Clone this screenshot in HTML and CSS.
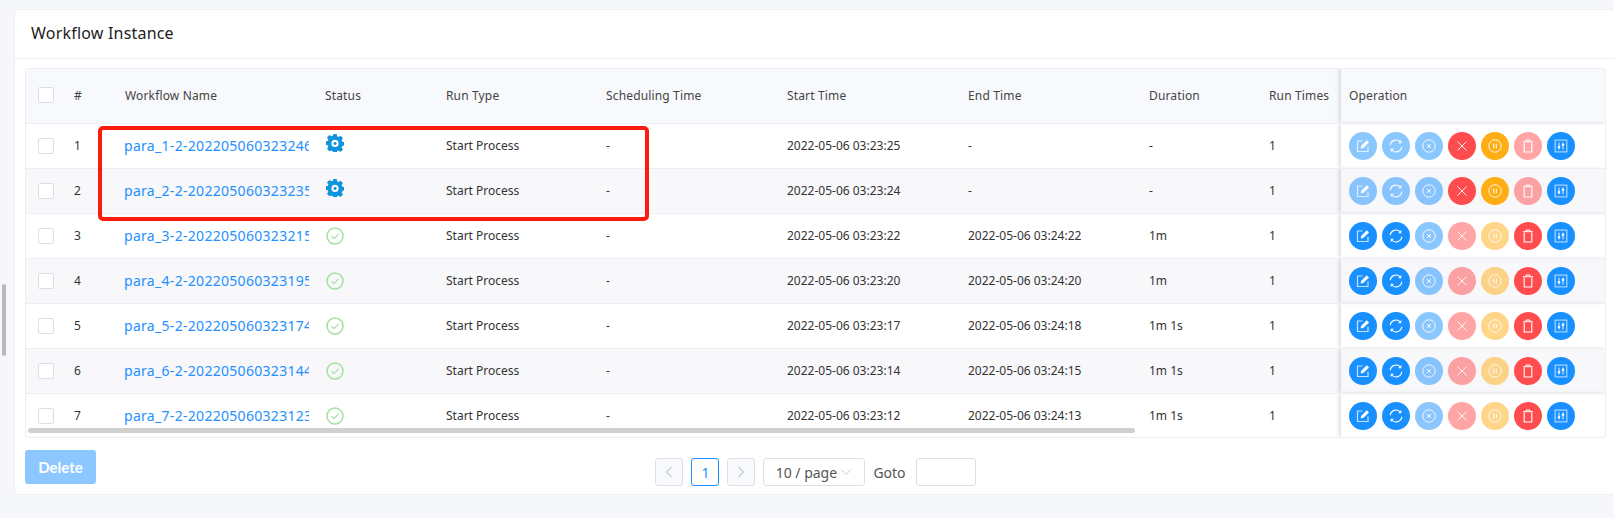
FILE: index.html
```html
<!DOCTYPE html>
<html lang="en">
<head>
  <meta charset="UTF-8">
  <title>Workflow Instance</title>
  <link rel="stylesheet" href="styles.css">
</head>
<body>
  <svg class="icon-defs" width="0" height="0">
    <defs>
      <symbol id="i-edit" viewBox="0 0 14 14"><path d="M6.500 2H1.500v10.500h10.500V7.500" fill="none" stroke="currentColor" stroke-width="1.200" opacity=".75"/><path d="M10.800 1.200l2.200 2.200-5.700 5.700-2.600.4.400-2.600z" fill="currentColor"/></symbol>
      <symbol id="i-refresh" viewBox="0 0 14 14"><path d="M1.200 6.300A5.900 5.900 0 0 1 11.400 3M12.800 7.700A5.900 5.900 0 0 1 2.600 11" fill="none" stroke="currentColor" stroke-width="1.100"/><path d="M12.300 1.100v3.200H9.100zM1.700 12.900V9.700h3.200z" fill="currentColor"/></symbol>
      <symbol id="i-stop" viewBox="0 0 14 14"><circle cx="7" cy="7" r="6.200" fill="none" stroke="currentColor" stroke-width=".9"/><path d="M5.100 5.100l3.800 3.800M8.900 5.100l-3.800 3.800" stroke="currentColor" stroke-width="1"/></symbol>
      <symbol id="i-close" viewBox="0 0 14 14"><path d="M2.500 2.500l9 9M11.500 2.500l-9 9" stroke="currentColor" stroke-width=".9"/></symbol>
      <symbol id="i-pause" viewBox="0 0 14 14"><circle cx="7" cy="7" r="6.200" fill="none" stroke="currentColor" stroke-width=".9"/><path d="M5.700 4.600v4.800M8.300 4.600v4.800" stroke="currentColor" stroke-width="1"/></symbol>
      <symbol id="i-trash" viewBox="0 0 14 14"><path d="M2 2.700h10M5 2.700V1h4v1.700" fill="none" stroke="currentColor" stroke-width="1"/><path d="M3.200 3.500v9.500h7.600V3.500" fill="none" stroke="currentColor" stroke-width="1.100"/></symbol>
      <symbol id="i-gantt" viewBox="0 0 14 14"><path d="M1.200 1.200h11.600v11.600H1.200z" fill="none" stroke="currentColor" stroke-width="1.300" opacity=".6"/><path d="M5 3.500v7M9 3.500v7" stroke="currentColor" stroke-width=".9"/><path d="M3.800 7.200h2.400v2H3.800zM7.800 4.800h2.400v2H7.800z" fill="currentColor"/></symbol>
      <symbol id="i-gear" viewBox="0 0 16 16"><path fill-rule="evenodd" d="M6.500 0h3l.4 2.100 1.300.6L13 1.500l2.100 2.200-1.200 1.700.6 1.400 2 .4v3l-2 .4-.6 1.400 1.200 1.700-2.100 2.200-1.800-1.200-1.300.6-.4 2.100h-3l-.4-2.100-1.300-.6L3 15.300.9 13.100l1.200-1.700-.6-1.400-2-.4V6.600l2-.4.6-1.400L.9 3.100 3 .9l1.800 1.200 1.300-.6zM8 5.200a3.200 3.200 0 1 0 0 6.400 3.200 3.200 0 0 0 0-6.400z"/><circle cx="8" cy="8.400" r="1.300"/></symbol>
      <symbol id="i-ok" viewBox="0 0 18 18"><circle cx="9" cy="9" r="8" fill="none" stroke="currentColor" stroke-width="1.500"/><path d="M5.500 9.200l2.500 2.500 4.600-4.800" fill="none" stroke="currentColor" stroke-width="1.100"/></symbol>
      <symbol id="i-left" viewBox="0 0 10 14"><path d="M7.500 2L2.500 7l5 5" fill="none" stroke="currentColor" stroke-width="1.100"/></symbol>
      <symbol id="i-right" viewBox="0 0 10 14"><path d="M2.500 2l5 5-5 5" fill="none" stroke="currentColor" stroke-width="1.100"/></symbol>
      <symbol id="i-down" viewBox="0 0 14 10"><path d="M2 2.500l5 5 5-5" fill="none" stroke="currentColor" stroke-width="1"/></symbol>
    </defs>
  </svg>

  <div class="page-scroll"></div>

  <div class="card">
    <div class="card-title">Workflow Instance</div>
    <div class="card-body">
      <div class="table-box">
        <table class="list-table">
          <colgroup>
            <col class="c-check"><col class="c-num"><col class="c-name"><col class="c-status"><col class="c-type"><col class="c-sched"><col class="c-time"><col class="c-time"><col class="c-dur"><col class="c-runs"><col class="c-op">
          </colgroup>
          <thead>
            <tr>
              <th><span class="check"></span></th>
              <th>#</th>
              <th class="name-head">Workflow Name</th>
              <th>Status</th>
              <th>Run Type</th>
              <th>Scheduling Time</th>
              <th>Start Time</th>
              <th>End Time</th>
              <th>Duration</th>
              <th>Run Times</th>
              <th class="op-cell">Operation</th>
            </tr>
          </thead>
          <tbody>
            <tr>
              <td><span class="check"></span></td><td>1</td>
              <td><a class="name-link">para_1-2-20220506032324631</a></td>
              <td><svg class="st-icon st-run"><use href="#i-gear"/></svg></td>
              <td>Start Process</td><td>-</td><td>2022-05-06 03:23:25</td><td>-</td><td>-</td><td>1</td>
              <td class="op-cell"><div class="ops">
                <span class="op blue off"><svg><use href="#i-edit"/></svg></span>
                <span class="op blue off"><svg><use href="#i-refresh"/></svg></span>
                <span class="op blue off"><svg><use href="#i-stop"/></svg></span>
                <span class="op red"><svg><use href="#i-close"/></svg></span>
                <span class="op amber"><svg><use href="#i-pause"/></svg></span>
                <span class="op red off"><svg><use href="#i-trash"/></svg></span>
                <span class="op blue"><svg><use href="#i-gantt"/></svg></span>
              </div></td>
            </tr>
            <tr>
              <td><span class="check"></span></td><td>2</td>
              <td><a class="name-link">para_2-2-20220506032323571</a></td>
              <td><svg class="st-icon st-run"><use href="#i-gear"/></svg></td>
              <td>Start Process</td><td>-</td><td>2022-05-06 03:23:24</td><td>-</td><td>-</td><td>1</td>
              <td class="op-cell"><div class="ops">
                <span class="op blue off"><svg><use href="#i-edit"/></svg></span>
                <span class="op blue off"><svg><use href="#i-refresh"/></svg></span>
                <span class="op blue off"><svg><use href="#i-stop"/></svg></span>
                <span class="op red"><svg><use href="#i-close"/></svg></span>
                <span class="op amber"><svg><use href="#i-pause"/></svg></span>
                <span class="op red off"><svg><use href="#i-trash"/></svg></span>
                <span class="op blue"><svg><use href="#i-gantt"/></svg></span>
              </div></td>
            </tr>
            <tr>
              <td><span class="check"></span></td><td>3</td>
              <td><a class="name-link">para_3-2-20220506032321571</a></td>
              <td><svg class="st-icon st-ok"><use href="#i-ok"/></svg></td>
              <td>Start Process</td><td>-</td><td>2022-05-06 03:23:22</td><td>2022-05-06 03:24:22</td><td>1m</td><td>1</td>
              <td class="op-cell"><div class="ops">
                <span class="op blue"><svg><use href="#i-edit"/></svg></span>
                <span class="op blue"><svg><use href="#i-refresh"/></svg></span>
                <span class="op blue off"><svg><use href="#i-stop"/></svg></span>
                <span class="op red off"><svg><use href="#i-close"/></svg></span>
                <span class="op amber off"><svg><use href="#i-pause"/></svg></span>
                <span class="op red"><svg><use href="#i-trash"/></svg></span>
                <span class="op blue"><svg><use href="#i-gantt"/></svg></span>
              </div></td>
            </tr>
            <tr>
              <td><span class="check"></span></td><td>4</td>
              <td><a class="name-link">para_4-2-20220506032319571</a></td>
              <td><svg class="st-icon st-ok"><use href="#i-ok"/></svg></td>
              <td>Start Process</td><td>-</td><td>2022-05-06 03:23:20</td><td>2022-05-06 03:24:20</td><td>1m</td><td>1</td>
              <td class="op-cell"><div class="ops">
                <span class="op blue"><svg><use href="#i-edit"/></svg></span>
                <span class="op blue"><svg><use href="#i-refresh"/></svg></span>
                <span class="op blue off"><svg><use href="#i-stop"/></svg></span>
                <span class="op red off"><svg><use href="#i-close"/></svg></span>
                <span class="op amber off"><svg><use href="#i-pause"/></svg></span>
                <span class="op red"><svg><use href="#i-trash"/></svg></span>
                <span class="op blue"><svg><use href="#i-gantt"/></svg></span>
              </div></td>
            </tr>
            <tr>
              <td><span class="check"></span></td><td>5</td>
              <td><a class="name-link">para_5-2-20220506032317471</a></td>
              <td><svg class="st-icon st-ok"><use href="#i-ok"/></svg></td>
              <td>Start Process</td><td>-</td><td>2022-05-06 03:23:17</td><td>2022-05-06 03:24:18</td><td>1m 1s</td><td>1</td>
              <td class="op-cell"><div class="ops">
                <span class="op blue"><svg><use href="#i-edit"/></svg></span>
                <span class="op blue"><svg><use href="#i-refresh"/></svg></span>
                <span class="op blue off"><svg><use href="#i-stop"/></svg></span>
                <span class="op red off"><svg><use href="#i-close"/></svg></span>
                <span class="op amber off"><svg><use href="#i-pause"/></svg></span>
                <span class="op red"><svg><use href="#i-trash"/></svg></span>
                <span class="op blue"><svg><use href="#i-gantt"/></svg></span>
              </div></td>
            </tr>
            <tr>
              <td><span class="check"></span></td><td>6</td>
              <td><a class="name-link">para_6-2-20220506032314471</a></td>
              <td><svg class="st-icon st-ok"><use href="#i-ok"/></svg></td>
              <td>Start Process</td><td>-</td><td>2022-05-06 03:23:14</td><td>2022-05-06 03:24:15</td><td>1m 1s</td><td>1</td>
              <td class="op-cell"><div class="ops">
                <span class="op blue"><svg><use href="#i-edit"/></svg></span>
                <span class="op blue"><svg><use href="#i-refresh"/></svg></span>
                <span class="op blue off"><svg><use href="#i-stop"/></svg></span>
                <span class="op red off"><svg><use href="#i-close"/></svg></span>
                <span class="op amber off"><svg><use href="#i-pause"/></svg></span>
                <span class="op red"><svg><use href="#i-trash"/></svg></span>
                <span class="op blue"><svg><use href="#i-gantt"/></svg></span>
              </div></td>
            </tr>
            <tr>
              <td><span class="check"></span></td><td>7</td>
              <td><a class="name-link">para_7-2-20220506032312371</a></td>
              <td><svg class="st-icon st-ok"><use href="#i-ok"/></svg></td>
              <td>Start Process</td><td>-</td><td>2022-05-06 03:23:12</td><td>2022-05-06 03:24:13</td><td>1m 1s</td><td>1</td>
              <td class="op-cell"><div class="ops">
                <span class="op blue"><svg><use href="#i-edit"/></svg></span>
                <span class="op blue"><svg><use href="#i-refresh"/></svg></span>
                <span class="op blue off"><svg><use href="#i-stop"/></svg></span>
                <span class="op red off"><svg><use href="#i-close"/></svg></span>
                <span class="op amber off"><svg><use href="#i-pause"/></svg></span>
                <span class="op red"><svg><use href="#i-trash"/></svg></span>
                <span class="op blue"><svg><use href="#i-gantt"/></svg></span>
              </div></td>
            </tr>
          </tbody>
        </table>
        <div class="table-scroll"></div>
        <div class="mark-box"></div>
      </div>

      <div class="foot">
        <button class="delete-btn">Delete</button>
        <div class="pager">
          <span class="pg-btn pg-off"><svg><use href="#i-left"/></svg></span>
          <span class="pg-btn pg-cur">1</span>
          <span class="pg-btn pg-off"><svg><use href="#i-right"/></svg></span>
          <span class="pg-size">10 / page<svg><use href="#i-down"/></svg></span>
          <span class="pg-goto">Goto</span>
          <span class="pg-input"></span>
        </div>
      </div>
    </div>
  </div>
</body>
</html>
```

FILE: styles.css
```css
/* page */
* {
  box-sizing: border-box;
}
html, body {
  height: 100%;
  overflow: hidden;
}
body {
  margin: 0;
  padding: 9px 0 0 14px;
  background: #f6f7fb;
  color: #333;
  font-family: "Noto Sans", "Open Sans", sans-serif;
  font-size: 12px;
}
.icon-defs {
  position: absolute;
}
.page-scroll {
  position: absolute;
  left: 2px;
  top: 284px;
  width: 4px;
  height: 72px;
  border-radius: 2px;
  background: #b9b9bc;
}

/* card */
.card {
  height: 486px;
  background: #fff;
  border: 1px solid #eef0f5;
  border-right: 0;
  border-radius: 3px 0 0 3px;
}
.card-title {
  height: 49px;
  padding-left: 16px;
  border-bottom: 1px solid #ebeef5;
  color: #222;
  font-size: 16px;
  letter-spacing: 0.2px;
  line-height: 46px;
}
.card-body {
  padding: 9px 8px 0 10px;
}

/* table */
.table-box {
  position: relative;
  height: 370px;
  border: 1px solid #ebeef5;
  border-radius: 3px;
  overflow: hidden;
}
.list-table {
  width: 1581px;
  margin: -1px 0 0 -1px;
  table-layout: fixed;
  border-collapse: collapse;
}
.c-check { width: 37px; }
.c-num { width: 50px; }
.c-name { width: 201px; }
.c-status { width: 121px; }
.c-type { width: 160px; }
.c-sched { width: 181px; }
.c-time { width: 181px; }
.c-dur { width: 120px; }
.c-runs { width: 84px; }
.c-op { width: 265px; }
.list-table th {
  height: 55px;
  padding: 0 0 0 12px;
  background: #f8f9fc;
  border-bottom: 1px solid #ebeef5;
  color: #444;
  font-weight: 400;
  letter-spacing: 0.15px;
  text-align: left;
}
.list-table td {
  height: 45px;
  padding: 0 0 0 12px;
  border-bottom: 1px solid #ebeef5;
  color: #333;
}
.list-table tbody tr:nth-child(even) td {
  background: #f8f8fb;
}
.list-table .name-head {
  padding-left: 13px;
}
.list-table .op-cell {
  padding-left: 8px;
  background-clip: padding-box;
  box-shadow: -3px 0 4px -1px rgba(0, 0, 0, 0.14);
}
.check {
  display: block;
  width: 16px;
  height: 16px;
  margin-left: 1px;
  background: #fff;
  border: 1px solid #dcdfe6;
  border-radius: 2px;
}
.name-link {
  display: block;
  width: 185px;
  overflow: hidden;
  color: #2490ff;
  font-size: 14px;
  letter-spacing: 0.3px;
  white-space: nowrap;
}
.st-icon {
  display: block;
  margin: -6px 0 0 1px;
}
.st-run {
  width: 18px;
  height: 18px;
  fill: #0e93dc;
}
.st-ok {
  width: 18px;
  height: 18px;
  margin-top: 0;
  color: #a3e0a0;
}

/* operation buttons */
.ops {
  display: flex;
  gap: 5px;
}
.op {
  display: flex;
  align-items: center;
  justify-content: center;
  width: 28px;
  height: 28px;
  border-radius: 50%;
  color: #fff;
}
.op svg {
  width: 14px;
  height: 14px;
}
.blue { background: #1890ff; }
.red { background: #ff4d4f; }
.amber { background: #ffad14; }
.off { opacity: 0.5; }

/* overlays on the table */
.table-scroll {
  position: absolute;
  left: 2px;
  bottom: 4px;
  width: 1107px;
  height: 5px;
  border-radius: 3px;
  background: #d0d0d0;
}
.mark-box {
  position: absolute;
  left: 72px;
  top: 57px;
  width: 551px;
  height: 95px;
  border: 4px solid #ff1a0e;
  border-radius: 5px;
}

/* footer */
.foot {
  position: relative;
  display: flex;
  justify-content: center;
  padding-top: 20px;
}
.delete-btn {
  position: absolute;
  left: 0;
  top: 12px;
  width: 71px;
  height: 34px;
  padding-bottom: 2px;
  background: #8cc8ff;
  border: 0;
  border-radius: 3px;
  color: #fff;
  font-family: "Lato", sans-serif;
  font-size: 15px;
  font-weight: 700;
}
.pager {
  display: flex;
  align-items: center;
  gap: 8px;
  height: 28px;
  font-size: 14px;
  color: #555;
}
.pg-btn {
  display: flex;
  align-items: center;
  justify-content: center;
  width: 28px;
  height: 28px;
  border: 1px solid #dcdfe6;
  border-radius: 3px;
}
.pg-btn svg {
  width: 10px;
  height: 14px;
}
.pg-off {
  background: #f8f9fc;
  color: #c5c8ce;
}
.pg-cur {
  border-color: #1890ff;
  color: #1890ff;
}
.pg-size {
  display: flex;
  align-items: center;
  justify-content: center;
  gap: 2px;
  width: 102px;
  height: 28px;
  border: 1px solid #dcdfe6;
  border-radius: 3px;
}
.pg-size svg {
  width: 14px;
  height: 10px;
  color: #c5c8ce;
}
.pg-input {
  width: 60px;
  height: 28px;
  margin-left: 2px;
  border: 1px solid #dcdfe6;
  border-radius: 3px;
}
```
